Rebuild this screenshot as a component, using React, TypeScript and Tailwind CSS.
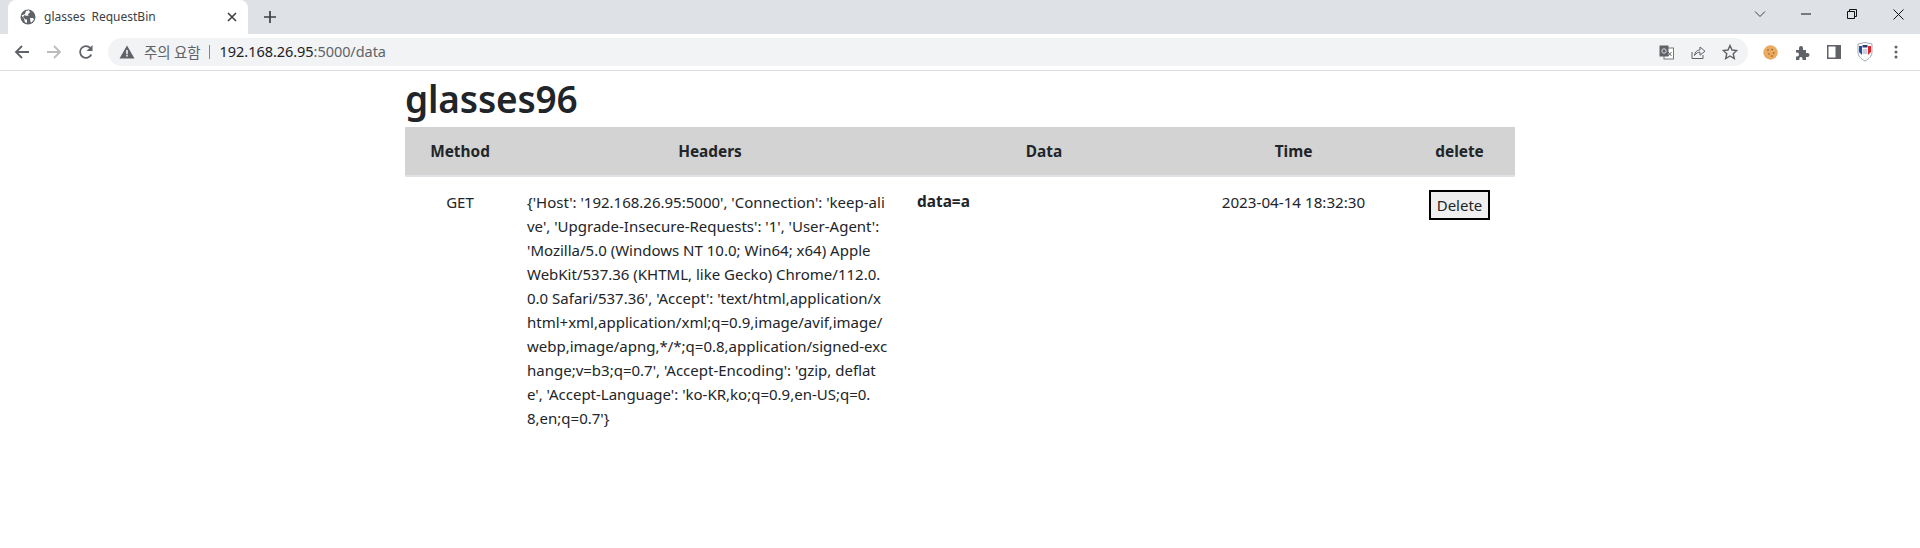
import React from "react";

const Row = ["Method", "Headers", "Data", "Time", "delete"];
const lines = [
  "{'Host': '192.168.26.95:5000', 'Connection': 'keep-ali",
  "ve', 'Upgrade-Insecure-Requests': '1', 'User-Agent':",
  "'Mozilla/5.0 (Windows NT 10.0; Win64; x64) Apple",
  "WebKit/537.36 (KHTML, like Gecko) Chrome/112.0.",
  "0.0 Safari/537.36', 'Accept': 'text/html,application/x",
  "html+xml,application/xml;q=0.9,image/avif,image/",
  "webp,image/apng,*/*;q=0.8,application/signed-exc",
  "hange;v=b3;q=0.7', 'Accept-Encoding': 'gzip, deflat",
  "e', 'Accept-Language': 'ko-KR,ko;q=0.9,en-US;q=0.",
  "8,en;q=0.7'}",
];

function Globe() {
  return (
    <svg width="16" height="16" viewBox="0 0 16 16" className="shrink-0">
      <circle cx="8" cy="8" r="7.5" fill="#5f6368" />
      <path d="M1.5 6.5 5 5l1-3 3-.8 1 2-2 2 .5 1.5H6L4.5 6 3 8l2.5 2.5L7 10.5V14l-2-.8-1-3.5z M10 9h3l1 1.5L11.5 13.5 10.5 13z" fill="#fff" />
    </svg>
  );
}

export default function App() {
  return (
    <div className="w-[1920px] h-[548px] bg-white overflow-hidden flex flex-col font-['Noto_Sans','Noto_Sans_CJK_KR',sans-serif] text-[#212529]">
      {/* tab strip */}
      <div className="h-[34px] bg-[#dee1e6] flex items-end shrink-0">
        <div className="ml-[8px] w-[240px] h-[34px] mt-auto bg-white rounded-t-[8px] flex items-center pl-[12px] pr-[10px] relative self-end">
          <Globe />
          <span className="ml-[8px] text-[12px] text-[#3c4043] whitespace-pre flex-1 font-['Noto_Sans',sans-serif]">glasses  RequestBin</span>
          <svg width="12" height="12" viewBox="0 0 12 12"><path d="M2 2l8 8M10 2l-8 8" stroke="#3c4043" strokeWidth="1.6" /></svg>
        </div>
        <div className="h-[34px] w-[36px] ml-[4px] flex items-center justify-center">
          <svg width="14" height="14" viewBox="0 0 14 14"><path d="M7 1v12M1 7h12" stroke="#3c4043" strokeWidth="1.7" /></svg>
        </div>
        <div className="flex-1" />
        <div className="h-[34px] flex items-center">
          <div className="w-[46px] flex justify-center pb-[6px]">
            <svg width="12" height="8" viewBox="0 0 12 8"><path d="M1 1.5l5 5 5-5" fill="none" stroke="#3c4043" strokeWidth="1" /></svg>
          </div>
          <div className="w-[46px] flex justify-center pb-[6px]">
            <svg width="10" height="10" viewBox="0 0 10 10"><path d="M0 5h10" stroke="#111" strokeWidth="1" /></svg>
          </div>
          <div className="w-[46px] flex justify-center pb-[6px]">
            <svg width="10" height="10" viewBox="0 0 10 10"><path d="M.5 2.5h7v7h-7zM2.5 2.5v-2h7v7h-2" fill="none" stroke="#111" strokeWidth="1" /></svg>
          </div>
          <div className="w-[46px] -mr-[1px] flex justify-center pb-[6px]">
            <svg width="11" height="11" viewBox="0 0 11 11"><path d="M.5.5l10 10M10.5.5l-10 10" stroke="#111" strokeWidth="1" /></svg>
          </div>
        </div>
      </div>
      {/* toolbar */}
      <div className="h-[37px] bg-white border-b border-[#dadce0] flex items-center shrink-0">
        <div className="w-[108px] flex items-center shrink-0 pl-[14px] gap-[16px]">
          <svg width="16" height="16" viewBox="0 0 16 16"><path d="M15 8H2.5M8 2 2 8l6 6" fill="none" stroke="#5f6368" strokeWidth="1.8" /></svg>
          <svg width="16" height="16" viewBox="0 0 16 16"><path d="M1 8h12.5M8 2l6 6-6 6" fill="none" stroke="#babcbe" strokeWidth="1.8" /></svg>
          <svg width="16" height="16" viewBox="0 0 16 16"><path d="M13.3 10.5A5.9 5.9 0 1 1 12.2 3.8" fill="none" stroke="#5f6368" strokeWidth="1.8" /><path d="M14.5 1v6h-6z" fill="#5f6368" /></svg>
        </div>
        <div className="w-[1640px] h-[28px] rounded-full bg-[#f1f3f4] flex items-center pl-[11px] relative shrink-0">
          <svg width="16" height="14" viewBox="0 0 16 14"><path d="M8 0.5 15.5 13.5H.5z" fill="#5f6368" /><path d="M7.2 5h1.6v4.2H7.2zM7.2 10h1.6v1.6H7.2z" fill="#f1f3f4" /></svg>
          <span className="ml-[9px] text-[14.5px] text-[#5f6368] font-['Noto_Sans_CJK_KR',sans-serif]">주의 요함</span>
          <span className="ml-[8px] w-px h-[14px] bg-[#80868b]" />
          <span className="ml-[10px] text-[14.5px] tracking-[-0.05px] text-[#202124] font-['Noto_Sans',sans-serif]">192.168.26.95<span className="text-[#5f6368]">:5000/data</span></span>
          <div className="ml-auto flex items-center gap-[16px] pr-[10px]">
            <svg width="15" height="15" viewBox="0 0 15 15"><rect x="5" y="3" width="9.5" height="11" fill="#fff" stroke="#777" /><rect x="0.5" y="0.5" width="9" height="11" fill="#5f6368" /><circle cx="5" cy="6" r="2.2" fill="none" stroke="#ddd" /><path d="M9 7l3.5 4M12.5 7 9 11" stroke="#666" /></svg>
            <svg width="16" height="16" viewBox="0 0 16 16"><path d="M2 8v6.5h11V11" fill="none" stroke="#5f6368" /><path d="M4.5 11.5C5 7.5 7.5 6 10 6V3l5 4.2-5 4V8.2C8 8.2 6 9 4.5 11.5z" fill="none" stroke="#5f6368" /></svg>
            <svg width="16" height="16" viewBox="0 0 16 16"><path d="M8 1.5 10 6l4.8.5-3.6 3.2 1.1 4.8L8 12l-4.3 2.5 1.1-4.8L1.2 6.5 6 6z" fill="none" stroke="#5f6368" strokeWidth="1.4" /></svg>
          </div>
        </div>
        <div className="flex-1 flex items-center pl-[15px] gap-[17px]">
          <svg width="15" height="15" viewBox="0 0 15 15"><circle cx="7.5" cy="7.5" r="7.2" fill="#eaaa62" /><circle cx="5" cy="5" r="0.8" fill="#8a5624" /><circle cx="9" cy="4.5" r="0.8" fill="#8a5624" /><circle cx="10.8" cy="8" r="0.8" fill="#8a5624" /><circle cx="6" cy="9" r="0.8" fill="#8a5624" /><circle cx="9" cy="11" r="0.8" fill="#8a5624" /></svg>
          <svg width="15" height="15" viewBox="0 0 15 15"><path d="M1 5h3V3a2 2 0 0 1 4 0v2h3v3h1.5a2 2 0 0 1 0 4H11v3H7.5v-1.5a1.6 1.6 0 0 0-3.2 0V15H1v-3.5h1a2 2 0 0 0 0-4H1z" fill="#5f6368" /></svg>
          <svg width="14" height="14" viewBox="0 0 14 14"><rect width="14" height="14" fill="#5f6368" /><rect x="1.5" y="1.5" width="7" height="11" fill="#fff" /></svg>
          <svg width="16" height="20" viewBox="0 0 16 20" className="-ml-[1px]"><path d="M1 2 8 .5 15 2v8c0 4-3 7-7 9-4-2-7-5-7-9z" fill="#fff" stroke="#9aa7b8" /><path d="M2 4h3v9L2 10z" fill="#2a4a9c" /><path d="M11 4h3v6l-3 3z" fill="#d8262c" /><rect x="5.5" y="3" width="5" height="2.5" fill="#2a3f7a" /><rect x="5.5" y="7" width="5" height="5" fill="#c8d0dc" /></svg>
          <svg width="4" height="14" viewBox="0 0 4 14" className="ml-[4px]"><circle cx="2" cy="2" r="1.5" fill="#5f6368" /><circle cx="2" cy="7" r="1.5" fill="#5f6368" /><circle cx="2" cy="12" r="1.5" fill="#5f6368" /></svg>
        </div>
      </div>
      {/* page */}
      <div className="w-[1110px] ml-[405px]">
        <h1 className="text-[37px] leading-[48px] font-semibold tracking-[-0.15px] h-[56px] pt-[4px] m-0">glasses96</h1>
        <div className="grid grid-cols-[110px_390px_278px_221px_111px] text-[15.4px] leading-[24px]">
          {Row.map((h) => (
            <div key={h} className="bg-[#d3d3d3] py-[13px] h-[50px] text-center font-bold border-b-2 border-[#dee2e6]">{h}</div>
          ))}
          <div className="text-center pt-[13px] text-[15px]">GET</div>
          <div className="px-[12px] pt-[13px] text-[15px] whitespace-pre">
            {lines.map((l) => <div key={l}>{l}</div>)}
          </div>
          <div className="px-[12px] pt-[13px] font-bold text-[15.4px]">data=a</div>
          <div className="text-center pt-[13px] text-[15.2px]">2023-04-14 18:32:30</div>
          <div className="flex justify-center pt-[13px]">
            <button className="h-[30px] w-[61px] bg-[#efefef] border-2 border-black text-[15px] leading-none">Delete</button>
          </div>
        </div>
      </div>
    </div>
  );
}
